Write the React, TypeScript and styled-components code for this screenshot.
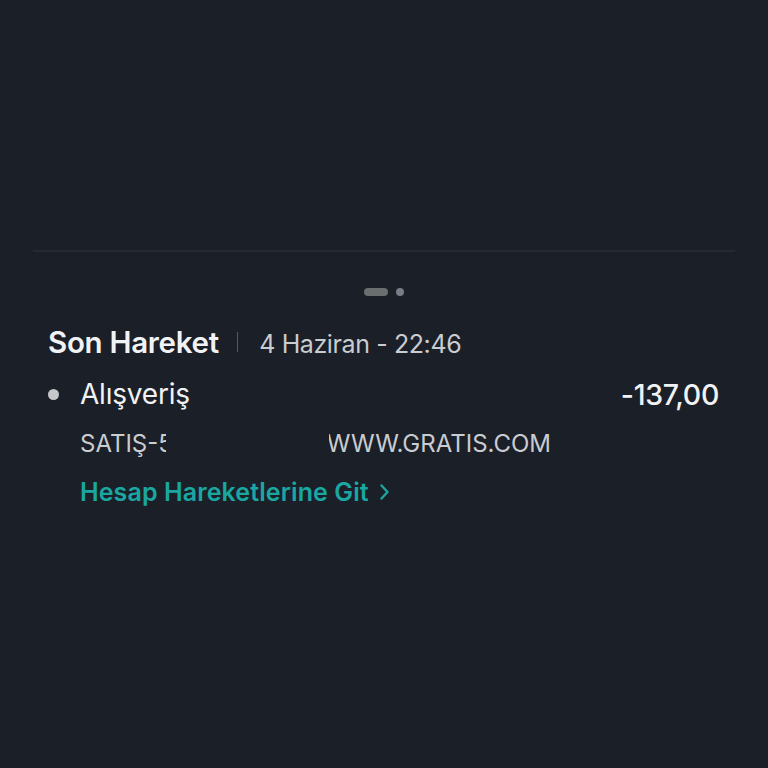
import React from "react";
import styled, { createGlobalStyle } from "styled-components";

const Global = createGlobalStyle`
  html, body { margin: 0; padding: 0; background: #1b1f27; }
  body { font-family: Inter, "Noto Sans", sans-serif; -webkit-font-smoothing: antialiased; }
`;

const Page = styled.div`
  width: 768px;
  height: 768px;
  background: #1b1f27;
  display: flex;
  flex-direction: column;
  padding-top: 250px;
  box-sizing: border-box;
`;

const Separator = styled.div`
  height: 2px;
  margin: 0 33px;
  background: #242933;
`;

const Pager = styled.div`
  display: flex;
  justify-content: center;
  align-items: center;
  gap: 8px;
  margin-top: 36px;
`;

const Pill = styled.span<{ $active?: boolean }>`
  display: block;
  height: 8px;
  width: ${(p) => (p.$active ? "24px" : "8px")};
  border-radius: 4px;
  background: ${(p) => (p.$active ? "#6b6e6f" : "#787c86")};
`;

const Section = styled.section`
  padding: 0 49px 0 48px;
  display: flex;
  flex-direction: column;
  margin-top: 25px;
`;

const TitleRow = styled.div`
  display: flex;
  align-items: baseline;
  height: 42px;
  line-height: 42px;
`;

const Title = styled.h2`
  margin: 0;
  font-size: 29.5px;
  font-weight: 600;
  color: #f1f2f4;
  letter-spacing: -0.3px;
`;

const Divider = styled.span`
  width: 1.5px;
  height: 20px;
  background: #555a63;
  margin: 0 21px 0 18px;
  align-self: center;
`;

const DateText = styled.span`
  font-size: 25px;
  font-weight: 400;
  color: #c9ccd1;
  letter-spacing: -0.4px;
`;

const ItemRow = styled.div`
  display: flex;
  align-items: center;
  margin-top: 11px;
  height: 40px;
`;

const Bullet = styled.span`
  width: 11px;
  height: 11px;
  border-radius: 50%;
  background: #c6c7c8;
  margin-right: 21px;
`;

const ItemName = styled.span`
  flex: 1;
  font-size: 28px;
  font-weight: 400;
  color: #f1f2f4;
  letter-spacing: -0.2px;
`;

const Amount = styled.span`
  font-size: 28.5px;
  font-weight: 500;
  color: #f1f2f4;
  letter-spacing: -0.3px;
`;

const Detail = styled.div`
  display: flex;
  align-items: center;
  padding-left: 32px;
  margin-top: 13px;
  height: 32px;
  font-size: 24px;
  color: #c9ccd1;
  letter-spacing: 0px;
`;

const Clip = styled.span<{ $w: number }>`
  display: inline-block;
  overflow: hidden;
  white-space: nowrap;
  width: ${(p) => p.$w}px;
`;

const Gap = styled.span<{ $w: number }>`
  display: inline-block;
  width: ${(p) => p.$w}px;
`;

const RtlClip = styled.span<{ $w: number }>`
  display: inline-block;
  overflow: hidden;
  white-space: nowrap;
  direction: rtl;
  width: ${(p) => p.$w}px;
`;

const LinkRow = styled.a`
  display: flex;
  align-items: center;
  gap: 10px;
  padding-left: 32px;
  margin-top: 16px;
  height: 34px;
  font-size: 25px;
  font-weight: 600;
  color: #1aa6a1;
  text-decoration: none;
  letter-spacing: 0.1px;
`;

export default function App() {
  return (
    <>
      <Global />
      <Page>
        <Separator />
        <Pager>
          <Pill $active />
          <Pill />
        </Pager>
        <Section>
          <TitleRow>
            <Title>Son Hareket</Title>
            <Divider />
            <DateText>4 Haziran - 22:46</DateText>
          </TitleRow>
          <ItemRow>
            <Bullet />
            <ItemName>Alışveriş</ItemName>
            <Amount>-137,00</Amount>
          </ItemRow>
          <Detail>
            <Clip $w={86}>SATIŞ-5</Clip>
            <Gap $w={163} />
            <RtlClip $w={222}>WWW.GRATIS.COM</RtlClip>
          </Detail>
          <LinkRow href="#">
            Hesap Hareketlerine Git
            <svg width="11" height="18" viewBox="0 0 11 18" fill="none">
              <path d="M2.5 2.5l6 6.5-6 6.5" stroke="#1aa6a1" strokeWidth="2.4" strokeLinecap="round" strokeLinejoin="round" />
            </svg>
          </LinkRow>
        </Section>
      </Page>
    </>
  );
}
